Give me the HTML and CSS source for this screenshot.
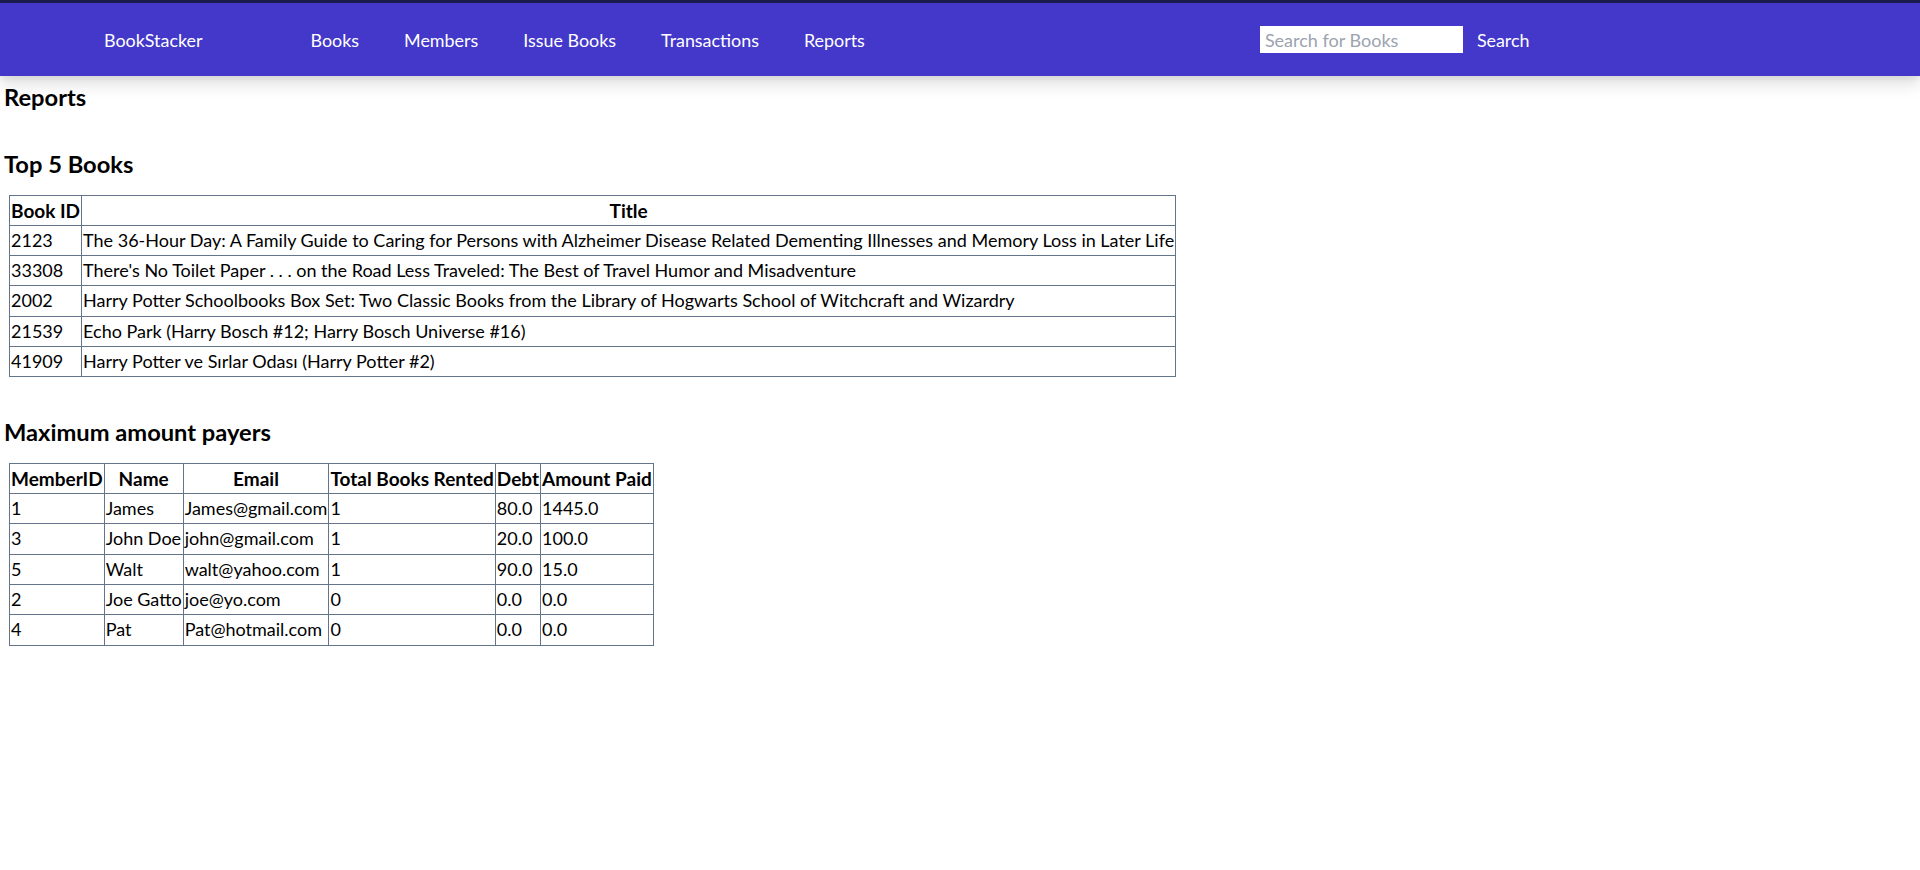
FILE: index.html
```html
<!DOCTYPE html>
<html lang="en">
<head>
<meta charset="utf-8">
<title>BookStacker - Reports</title>
<link rel="stylesheet" href="styles.css">
</head>
<body>
<nav class="navbar">
  <a class="brand" href="#">BookStacker</a>
  <ul class="nav-links">
    <li><a href="#">Books</a></li>
    <li><a href="#">Members</a></li>
    <li><a href="#">Issue Books</a></li>
    <li><a href="#">Transactions</a></li>
    <li><a href="#">Reports</a></li>
  </ul>
  <form class="search">
    <input class="search-input" type="text" placeholder="Search for Books">
    <button class="search-btn" type="button">Search</button>
  </form>
</nav>
<main class="page">
  <h2 class="page-title">Reports</h2>

  <section class="section">
    <h3 class="section-title">Top 5 Books</h3>
    <table class="report-table">
      <tr><th>Book ID</th><th>Title</th></tr>
      <tr><td>2123</td><td>The 36-Hour Day: A Family Guide to Caring for Persons with Alzheimer Disease Related Dementing Illnesses and Memory Loss in Later Life</td></tr>
      <tr><td>33308</td><td>There's No Toilet Paper . . . on the Road Less Traveled: The Best of Travel Humor and Misadventure</td></tr>
      <tr><td>2002</td><td>Harry Potter Schoolbooks Box Set: Two Classic Books from the Library of Hogwarts School of Witchcraft and Wizardry</td></tr>
      <tr><td>21539</td><td>Echo Park (Harry Bosch #12; Harry Bosch Universe #16)</td></tr>
      <tr><td>41909</td><td>Harry Potter ve Sırlar Odası (Harry Potter #2)</td></tr>
    </table>
  </section>

  <section class="section">
    <h3 class="section-title">Maximum amount payers</h3>
    <table class="report-table">
      <tr><th>MemberID</th><th>Name</th><th>Email</th><th>Total Books Rented</th><th>Debt</th><th>Amount Paid</th></tr>
      <tr><td>1</td><td>James</td><td>James@gmail.com</td><td>1</td><td>80.0</td><td>1445.0</td></tr>
      <tr><td>3</td><td>John Doe</td><td>john@gmail.com</td><td>1</td><td>20.0</td><td>100.0</td></tr>
      <tr><td>5</td><td>Walt</td><td>walt@yahoo.com</td><td>1</td><td>90.0</td><td>15.0</td></tr>
      <tr><td>2</td><td>Joe Gatto</td><td>joe@yo.com</td><td>0</td><td>0.0</td><td>0.0</td></tr>
      <tr><td>4</td><td>Pat</td><td>Pat@hotmail.com</td><td>0</td><td>0.0</td><td>0.0</td></tr>
    </table>
  </section>
</main>
</body>
</html>
```
FILE: styles.css
```css
* { box-sizing: border-box; }

html, body {
  margin: 0;
  padding: 0;
  background: #ffffff;
  color: #000000;
  font-family: Lato, "Open Sans", sans-serif;
  font-size: 17.9px;
}

.navbar {
  display: flex;
  align-items: center;
  height: 76px;
  padding-left: 104px;
  background: #4338ca;
  border-top: 3px solid #1d1a4f;
  box-shadow: 0 8px 16px rgba(0, 0, 0, 0.13), 0 3px 6px rgba(0, 0, 0, 0.06);
  color: #ffffff;
  line-height: 24px;
}

.brand {
  color: #ffffff;
  text-decoration: none;
  font-size: 17.9px;
  margin-right: 108px;
}

.nav-links {
  display: flex;
  gap: 45px;
  list-style: none;
  margin: 0;
  padding: 0;
}

.nav-links a {
  color: #ffffff;
  text-decoration: none;
}

.search {
  display: flex;
  align-items: center;
  gap: 14px;
  margin: 0 0 0 395px;
}

.search-input {
  width: 203px;
  height: 27px;
  border: none;
  outline: none;
  padding: 0 5px;
  background: #ffffff;
  font-family: Lato, "Open Sans", sans-serif;
  font-size: 18px;
  color: #111;
}

.search-input::placeholder {
  color: #9ca3af;
}

.search-btn {
  border: none;
  background: transparent;
  padding: 0;
  color: #ffffff;
  font-family: Lato, "Open Sans", sans-serif;
  font-size: 17.9px;
  line-height: 24px;
  cursor: pointer;
}

.page {
  padding: 6px 4px 0 4px;
}

.page-title,
.section-title {
  margin: 0;
  font-size: 23.7px;
  font-weight: 700;
  line-height: 31px;
}

.section {
  margin-top: 36px;
}

.section + .section {
  margin-top: 40px;
}

.section-title {
  margin-bottom: 14.5px;
}

.report-table {
  border-collapse: collapse;
  margin-left: 5px;
  border: 1px solid #64748b;
}

.report-table th,
.report-table td {
  border: 1px solid #64748b;
  padding: 1px;
  line-height: 27.3px;
  white-space: nowrap;
}

.report-table th {
  font-size: 19px;
  font-weight: 700;
  text-align: center;
}

.report-table td {
  font-size: 18px;
  text-align: left;
}
```
